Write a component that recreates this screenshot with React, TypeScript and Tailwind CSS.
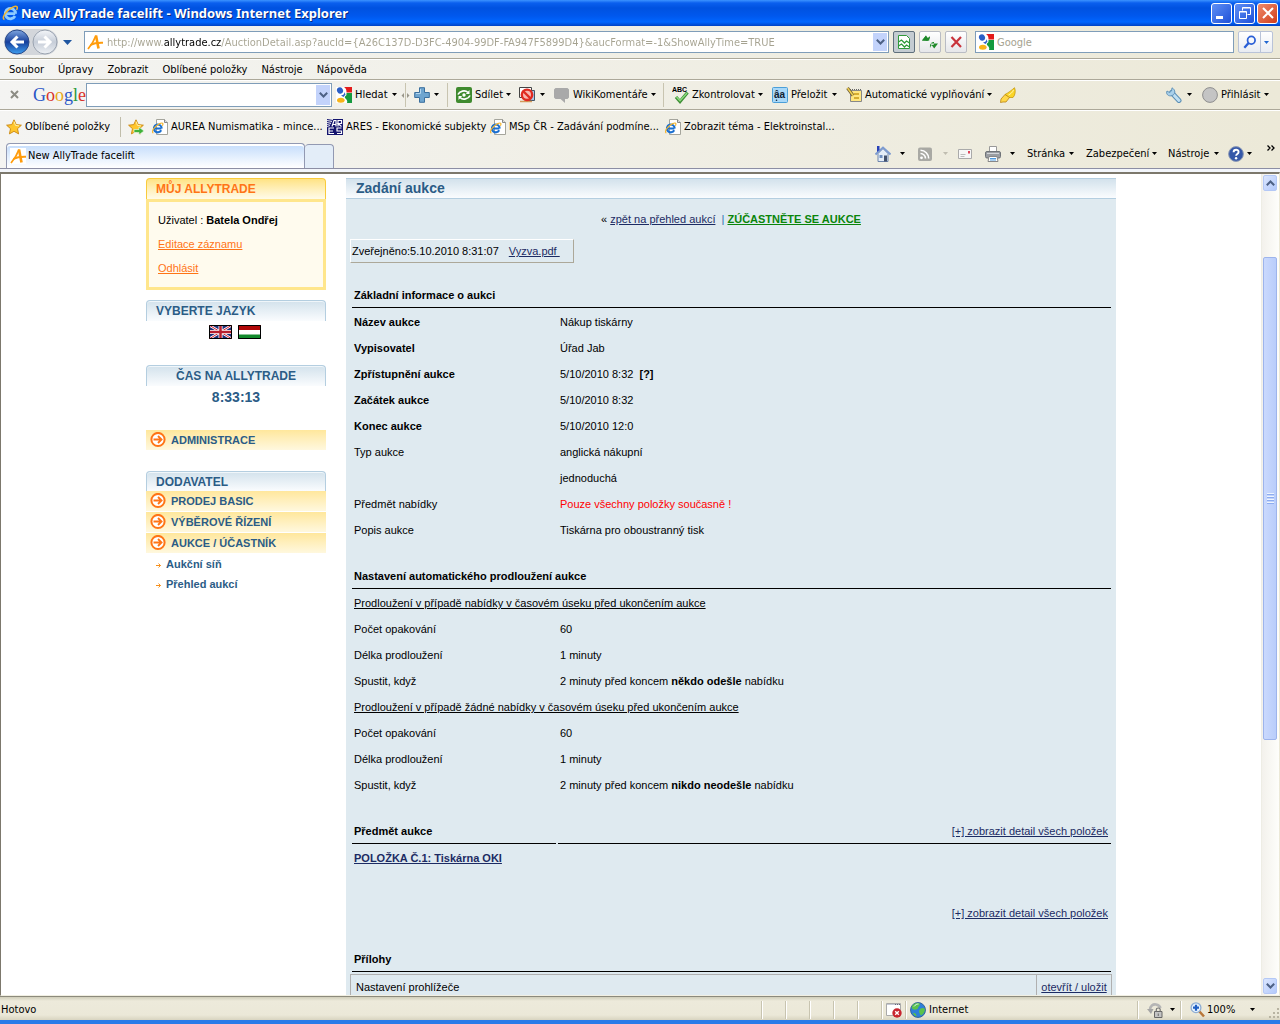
import React from "react";

type Kids = { children?: React.ReactNode; className?: string };

const UI = "font-['DejaVu_Sans_Condensed','Noto_Sans',sans-serif]";

function Svg({ children, size = 16 }: { children: React.ReactNode; size?: number }) {
  return (
    <svg width={size} height={size} viewBox="0 0 16 16" className="block shrink-0" aria-hidden="true">
      {children}
    </svg>
  );
}

function Arrow({ className = "text-black" }: { className?: string }) {
  return (
    <svg width="5" height="3" viewBox="0 0 5 3" className={"block shrink-0 " + className} aria-hidden="true">
      <path d="M0 0h5L2.5 3z" fill="currentColor" />
    </svg>
  );
}

const IELogo = ({ tone = "#2a84d8" }: { tone?: string }) => (
  <>
    <path d="M3.8 8.700h9.400M13 11a5.200 5.200 0 1 1 .6-2.300" fill="none" stroke={tone} strokeWidth="2.800" />
    <path d="M2.500 14.500C.5 14 1 10.500 5 6.500S13.500.6 14.800 1.600c.8.7.5 2-.3 3.400" fill="none" stroke="#f4b42c" strokeWidth="1.500" />
  </>
);

const IEPage = () => (
  <Svg>
    <path d="M4.500.5h8l3 3v12h-11z" fill="#fff" stroke="#a5a59c" />
    <path d="M12.500.5v3h3" fill="#ddd" stroke="#888" />
    <g transform="translate(-.5 3) scale(.75)">
      <IELogo tone="#1a6fd0" />
    </g>
  </Svg>
);

const AllyIcon = () => (
  <Svg>
    <path d="M0 0h16v16H0z" fill="#fff" />
    <path d="M1 15C4.500 11 7 7 9 1.500" fill="none" stroke="#ff9c0c" strokeWidth="1.800" />
    <path d="M9 1.500L11.500 14.500" fill="none" stroke="#ff9c0c" strokeWidth="2.600" />
    <path d="M3.500 11C7 9 11 8.500 16 8.700" fill="none" stroke="#ff9c0c" strokeWidth="2" />
  </Svg>
);

const GoogleG = () => (
  <Svg>
    <path d="M0 0h16v16H0z" fill="#fff" />
    <path d="M8 0h8v5.500h-5.500C10.500 3 10 1 8 0z" fill="#e31b1b" />
    <path d="M10.500 6H16v10h-5c.5-1 .5-3-1.500-4.500C8.500 10.500 8.500 9.500 9.500 9s1-1.500 1-3z" fill="#149a3e" />
    <ellipse cx="4" cy="3.500" rx="3" ry="3.300" fill="#2b5fc7" transform="rotate(-25 4 3.500)" />
    <path d="M5 8.500C8 8 8.500 6.500 8.300 5l1.200 2.500-2 2.500z" fill="#2b5fc7" />
    <ellipse cx="4.800" cy="13.200" rx="3.800" ry="2.500" fill="#f7b418" />
  </Svg>
);

const Star = ({ arrow = false }: { arrow?: boolean }) => (
  <Svg>
    <path d="M8 .8l2.200 4.800 5.200.6-3.900 3.500 1.100 5.200L8 12.300l-4.600 2.600 1.100-5.200L.6 6.200l5.200-.6z" fill="#ffc62e" stroke="#c98710" strokeWidth=".9" />
    <path d="M8 2.500l1.500 3.900 3.500.5" fill="none" stroke="#fff0a8" />
    {arrow && <path d="M6 10.500h5V8l5 4-5 3.800v-2.300H6z" fill="#3fb23a" stroke="#e9f7e2" strokeWidth=".7" />}
  </Svg>
);

const Plus = () => (
  <Svg>
    <path d="M5.500.7h5v4.800h4.800v5h-4.800v4.800h-5v-4.800H.7v-5h4.800z" fill="#6fa5cf" stroke="#3a6f9e" />
    <path d="M6.500 2v4.500H2" fill="none" stroke="#b5d7ef" />
  </Svg>
);

const ShareIcon = () => (
  <Svg>
    <rect width="16" height="16" rx="2" fill="#3f8a2e" />
    <path d="M2 7.500C3.500 4 9 2.500 12 5.500M14 8.500C12.500 12 7 13.500 4 10.500" fill="none" stroke="#fff" strokeWidth="1.700" />
    <path d="M13.500 3v4H9.800zM2.500 13V9h3.700z" fill="#fff" />
    <circle cx="8" cy="8" r="1.700" fill="#fff" />
  </Svg>
);

const BlockIcon = () => (
  <Svg>
    <path d="M.5.5h12v10H.5z" fill="#fff" stroke="#444" />
    <path d="M8.500 3.500h7v10h-7z" fill="#a8c6ea" stroke="#456" />
    <path d="M1 14.500h12" stroke="#d39a5a" strokeWidth="1.500" />
    <circle cx="8" cy="7.800" r="5.200" fill="#f7b6b0" stroke="#e02a20" strokeWidth="2.400" />
    <path d="M4.500 4.500l7 6.800" stroke="#e02a20" strokeWidth="2.400" />
  </Svg>
);

const Comment = () => (
  <Svg>
    <path d="M1.500 1h12L15 2.500v8L13.500 12H11v4l-4.500-4h-5L0 10.500v-8z" fill="#a9a9a9" />
  </Svg>
);

const Spell = () => (
  <svg width="17" height="18" viewBox="0 0 17 18" className="block shrink-0" aria-hidden="true">
    <text x="0" y="6" fontSize="7" fontWeight="700" fontFamily="Liberation Sans, sans-serif">ABC</text>
    <path d="M4 11l4 4.500L15.500 6.500" fill="none" stroke="#3f8f36" strokeWidth="3.200" />
    <path d="M4.500 11l3.500 3.700L15 7" fill="none" stroke="#8fdc80" strokeWidth="1.300" />
  </svg>
);

const Translate = () => (
  <Svg>
    <rect x=".5" y=".5" width="15" height="15" rx="1" fill="#a9d8f8" stroke="#4b9fd8" />
    <text x="2" y="11" fontSize="10" fontWeight="700" fill="#123" fontFamily="Liberation Sans, sans-serif">âa</text>
    <circle cx="4.500" cy="13.300" r=".8" fill="#123" />
  </Svg>
);

const Autofill = () => (
  <Svg>
    <path d="M4.500 3.500h11v11h-11z" fill="#ffe680" stroke="#888" />
    <path d="M4 2.500h12" stroke="#666" strokeDasharray="1 1" />
    <path d="M8 7h5" stroke="#c99a18" strokeWidth="1.500" />
    <path d="M8 11h5" stroke="#c99a18" strokeWidth="1.500" />
    <path d="M1.500 1l5.500 7.500" stroke="#6c5a30" strokeWidth="3" />
    <path d="M1.500 1l5.500 7.500" stroke="#f0d050" strokeWidth="1.500" />
  </Svg>
);

const Highlighter = () => (
  <Svg>
    <path d="M14.500.7c1.500 3 .5 8-1.500 9.800H8L5 7.500C8 6 12 3 14.500.7z" fill="#fbd526" stroke="#c69a10" strokeWidth=".8" />
    <path d="M5 7.500l4.500 3-3.500 4.500H3L.5 15.500 1 12z" fill="#ffd84a" stroke="#b98412" strokeWidth=".8" />
    <path d="M13.500 3c-1 2.500-3 4-5 5" fill="none" stroke="#fff4b0" />
  </Svg>
);

const Wrench = () => (
  <Svg>
    <path d="M5.500 5.500l7.500 8" stroke="#5b8fb5" strokeWidth="5" strokeLinecap="round" />
    <path d="M5.500 5.500l7.500 8" stroke="#bfdff2" strokeWidth="3" strokeLinecap="round" />
    <path d="M6 .8L5.500 4 3.500 5.500 1 4C-.5 7 2.500 9.800 6 8.600S10 3 6 .8z" fill="#a9d0ea" stroke="#5b8fb5" strokeWidth=".9" />
  </Svg>
);

const House = () => (
  <Svg>
    <path d="M3 7.500l5-5 5 5v8H3z" fill="#e4edf8" stroke="#6f86ad" />
    <path d="M.5 8.500L8 1.500l7.500 7" fill="none" stroke="#7d9bd0" strokeWidth="2" />
    <path d="M2 0h2.500v4L2 6z" fill="#2740b8" />
    <path d="M4.500 9h3v3h-3z" fill="#6f8fc0" />
    <path d="M9 9.500h3v6H9z" fill="#43516c" />
  </Svg>
);

const Rss = () => (
  <Svg>
    <rect x="1" y="1.500" width="14" height="13.500" rx="2" fill="#a9a9a4" />
    <circle cx="4.500" cy="11.800" r="1.400" fill="#fff" />
    <path d="M3.500 7.500a5 5 0 0 1 5 5M3.500 4.300a8.200 8.200 0 0 1 8.200 8.200" fill="none" stroke="#fff" strokeWidth="1.600" />
  </Svg>
);

const Mail = () => (
  <Svg>
    <path d="M1.500 3.500h13v9h-13z" fill="#f7f7f7" stroke="#aaa" />
    <path d="M3.500 8.500h5M3.500 10.500h4" stroke="#bcbcbc" />
    <path d="M11 5h2v2.500h-2z" fill="#e0455a" />
  </Svg>
);

const Printer = () => (
  <Svg>
    <path d="M4.500.5h7v6h-7z" fill="#fff" stroke="#999" />
    <rect x=".5" y="5.500" width="15" height="6.500" rx="1.500" fill="#9a9da2" stroke="#6f7378" />
    <path d="M2 7.500h12" stroke="#d3d6da" />
    <path d="M4 10.500h8l1 5H3z" fill="#fff" stroke="#888" />
    <path d="M5 12.500h6M5 14h6" stroke="#4f9be0" />
  </Svg>
);

const Help = () => (
  <Svg>
    <circle cx="8" cy="8" r="7.400" fill="#3558a8" stroke="#8e9bb5" />
    <path d="M5.600 6.200c0-3.300 5-3.200 5-.2 0 2-2.500 1.900-2.500 3.700" fill="none" stroke="#fff" strokeWidth="1.900" />
    <circle cx="8.100" cy="12.300" r="1.200" fill="#fff" />
  </Svg>
);

const Ares = () => (
  <Svg>
    <path d="M0 0h16v16H0z" fill="#14146e" />
    <path d="M0 1.500l6-1M0 3.500l5-1M0 5.500l4-1M0 7.500l3-1" stroke="#fff" strokeWidth=".9" />
    <path d="M5 7.500l2-6h2v6M6 5.500h3M11 7.500v-6h3.500v3H11l3.500 3M7 9H2v5.500h5M2 12h4M14.500 9H10v3h4.500v2.500H10" fill="none" stroke="#fff" strokeWidth="1.200" />
  </Svg>
);

const Globe = () => (
  <Svg>
    <circle cx="8" cy="8" r="7.500" fill="#2f7fd8" stroke="#27568c" strokeWidth=".8" />
    <path d="M3 2.800C5 1 9 .5 10 2c0 2-2 2.500-2 4S4 8.500 2.500 7C1.200 6 1.800 4 3 2.800zM10 7c2-1.500 4.500-1 5 .5-.3 3-2 5-4 6-1-1.500-3-4-1-6.500zM3 11c2-.5 3.500.5 3.500 3.500C5 14 3.500 13 3 11z" fill="#5cc24a" />
    <path d="M4 4.500c1.500-2 3-2.500 4.500-2.500" stroke="#dff3ff" fill="none" />
  </Svg>
);

const PagePrivacy = () => (
  <Svg>
    <path d="M.5 1.500h14v12H.5z" fill="#fff" stroke="#aaa" />
    <path d="M1 2.500h13" stroke="#c4c8d4" />
    <path d="M9 2.500h5" stroke="#667" strokeDasharray="1 1" />
    <circle cx="11" cy="11" r="4.700" fill="#c8252f" />
    <path d="M9.200 9.200l3.600 3.600M12.800 9.200l-3.600 3.600" stroke="#fff" strokeWidth="1.400" />
  </Svg>
);

const LockShield = () => (
  <Svg>
    <path d="M3 8c0-4 3-6 6-5.500C12 3 13 4.500 13.500 6" fill="none" stroke="#b5b5b5" strokeWidth="2.600" />
    <path d="M0 7h6.500L4 12z" fill="#a5a5a5" />
    <path d="M7.500 9.500h7.500v6H7.500z" fill="#c4c4c4" stroke="#666" />
    <path d="M9.300 9.500V7.500c0-2 3.900-2 3.900 0v2M11.300 11.500v2.500" fill="none" stroke="#777" strokeWidth="1.200" />
  </Svg>
);

const ZoomIcon = () => (
  <Svg>
    <path d="M9 9l5 5.500" stroke="#b9773a" strokeWidth="2.600" />
    <circle cx="6" cy="5.700" r="4.900" fill="#e8f4ff" stroke="#8fadd2" strokeWidth="1.300" />
    <path d="M6 2.700v6M3 5.700h6" stroke="#2160c4" strokeWidth="2.200" />
  </Svg>
);

function Chevron({ up = false }: { up?: boolean }) {
  return (
    <svg width="9" height="6" viewBox="0 0 9 6" className="block" aria-hidden="true">
      <path d={up ? "M.8 5.200l3.700-3.700 3.700 3.700" : "M.8.8l3.700 3.700L8.200.8"} fill="none" stroke="#4d6185" strokeWidth="2" />
    </svg>
  );
}

function ScrollButton({ up = false }: { up?: boolean }) {
  return (
    <button
      type="button"
      aria-label={up ? "Nahoru" : "Dolů"}
      className="flex h-4 w-full shrink-0 items-center justify-center rounded-xs border border-[#b4c8f6] bg-linear-to-br from-[#dbe6fe] to-[#b3c9fb]"
    >
      <Chevron up={up} />
    </button>
  );
}

function ToolButton({ icon, label, className = "", arrow = true }: { icon?: React.ReactNode; label?: string; className?: string; arrow?: boolean }) {
  return (
    <button type="button" aria-label={label ?? "Nástroj"} className={"flex h-5 shrink-0 items-center gap-[3px] whitespace-nowrap " + className}>
      {icon}
      {label && <span>{label}</span>}
      {arrow && (
        <span className="ml-auto">
          <Arrow />
        </span>
      )}
    </button>
  );
}

const Divider = () => <span className="h-6 w-px shrink-0 bg-[#c8c4b0]" />;

function FavLink({ icon, children, className }: Kids & { icon: React.ReactNode }) {
  return (
    <a href="#" className={"flex shrink-0 items-center gap-[3px] whitespace-nowrap " + (className ?? "")}>
      {icon}
      <span>{children}</span>
    </a>
  );
}

function SquareButton({ label, children, active = false }: Kids & { label: string; active?: boolean }) {
  return (
    <button
      type="button"
      aria-label={label}
      className={
        "flex h-[22px] w-[22px] shrink-0 items-center justify-center rounded-xs border " +
        (active ? "border-[#5f707c] bg-[#c4ccd2]" : "border-[#b9bcc4] bg-linear-to-b from-white to-[#e6e7ea]")
      }
    >
      {children}
    </button>
  );
}

function TitleBar() {
  return (
    <header className="flex h-[26px] shrink-0 items-center bg-[linear-gradient(#3c93ff_0,#0a5fee_3px,#0052e0_8px,#0058ee_16px,#0066ff_22px,#0042c4_26px)] pr-[2px] pl-[2px]">
      <Svg>
        <IELogo tone="#8ccbff" />
      </Svg>
      <h1 className="ml-[3px] font-['Noto_Sans',sans-serif] text-[13px] leading-5 font-bold whitespace-nowrap text-white [text-shadow:1px_1px_#0a2a80]">
        New AllyTrade facelift - Windows Internet Explorer
      </h1>
      <div className="ml-auto flex gap-[2px]">
        <button type="button" aria-label="Minimalizovat" className="flex h-[21px] w-[21px] items-end rounded-[3px] border border-white bg-linear-to-br from-[#5f8ff5] to-[#1f4fd8] p-1">
          <span className="h-[3px] w-[7px] bg-white" />
        </button>
        <button type="button" aria-label="Obnovit" className="flex h-[21px] w-[21px] items-center justify-center rounded-[3px] border border-white bg-linear-to-br from-[#5f8ff5] to-[#1f4fd8]">
          <svg width="12" height="12" viewBox="0 0 12 12" aria-hidden="true">
            <path d="M3.500 3.500v-3h8v7h-3M3.500 1h8M.5 4.500h7v7h-7zM.5 5h7" fill="none" stroke="#fff" />
          </svg>
        </button>
        <button type="button" aria-label="Zavřít" className="flex h-[21px] w-[21px] items-center justify-center rounded-[3px] border border-white bg-linear-to-br from-[#ee8a6a] to-[#d03a14]">
          <svg width="12" height="12" viewBox="0 0 12 12" aria-hidden="true">
            <path d="M1 1l10 10M11 1L1 11" stroke="#fff" strokeWidth="2" />
          </svg>
        </button>
      </div>
    </header>
  );
}

function RoundNav({ forward = false }: { forward?: boolean }) {
  const id = forward ? "nav-forward" : "nav-back";
  return (
    <button type="button" aria-label={forward ? "Vpřed" : "Zpět"} className="shrink-0">
      <svg width="26" height="26" viewBox="0 0 26 26" className="block" aria-hidden="true">
        <defs>
          <linearGradient id={id} x1="0" y1="0" x2="0" y2="1">
            <stop offset="0" stopColor={forward ? "#f4f6f9" : "#7fa6e0"} />
            <stop offset=".5" stopColor={forward ? "#c6cdd8" : "#163f9c"} />
            <stop offset="1" stopColor={forward ? "#eef1f5" : "#3f9ff0"} />
          </linearGradient>
        </defs>
        <circle cx="13" cy="13" r="12" fill={`url(#${id})`} stroke={forward ? "#9aa3b0" : "#2a4a8a"} />
        <path
          d={forward ? "M6 13h12M12.500 7.500L18 13l-5.500 5.500" : "M20 13H8M13.500 7.500L8 13l5.500 5.500"}
          fill="none"
          stroke="#fff"
          strokeWidth="3"
        />
      </svg>
    </button>
  );
}

function AddressBar() {
  return (
    <div className="flex h-8 shrink-0 items-center pr-[7px] pl-1">
      <div className="flex shrink-0 gap-[2px] rounded-full bg-[#d3d6db]">
        <RoundNav />
        <RoundNav forward />
      </div>
      <button type="button" aria-label="Poslední stránky" className="ml-[5px] shrink-0">
        <svg width="9" height="6" viewBox="0 0 9 6" className="block" aria-hidden="true">
          <path d="M0 1h9L4.500 6z" fill="#1f56a0" />
        </svg>
      </button>
      <div className="ml-3 flex h-[22px] min-w-0 flex-1 items-center border border-[#7f9db9] bg-white pl-[2px]">
        <AllyIcon />
        <input
          aria-label="Adresa"
          defaultValue="http://www.allytrade.cz/AuctionDetail.asp?aucId={A26C137D-D3FC-4904-99DF-FA947F5899D4}&aucFormat=-1&ShowAllyTime=TRUE"
          className="ml-[4px] h-5 min-w-0 flex-1 bg-[linear-gradient(90deg,#a5a290_57px,#000_57px,#000_114px,#a5a290_114px)] bg-clip-text text-[11px] text-transparent outline-none"
        />
        <button type="button" aria-label="Historie adres" className="mr-px flex h-[18px] w-[14px] items-center justify-center bg-[#c3d3fb]">
          <Chevron />
        </button>
      </div>
      <div className="ml-1 flex shrink-0 gap-1">
        <SquareButton label="Kompatibilní zobrazení" active>
          <Svg>
            <path d="M2.500 1.500h8l3 3v10h-11z" fill="#fff" stroke="#2f9a3a" />
            <path d="M2.500 8l3-2 3 3 2-2 3 2M2.500 12l3-2 3 3 2-2 3 2" fill="none" stroke="#2f9a3a" strokeWidth="1.300" />
          </Svg>
        </SquareButton>
        <SquareButton label="Aktualizovat">
          <Svg>
            <path d="M0 6.500L4 1.500v2.500c2 0 3-.5 4-2 .3 3-1 5-4 5h4z" fill="#1f8a2a" />
            <path d="M0 6.500h7.500L4 1.500z" fill="#1f8a2a" />
            <path d="M16 9.500H8.500l3.700 5zM12 10.500c-2 0-3 .5-4 3.500-.3-4 1-6 4-6z" fill="#1f8a2a" />
          </Svg>
        </SquareButton>
        <SquareButton label="Zastavit">
          <Svg>
            <path d="M3.500 3l9.500 10M13 3L3.500 13" stroke="#c9343c" strokeWidth="2.200" />
          </Svg>
        </SquareButton>
      </div>
      <div className="ml-[8px] flex h-[22px] w-[259px] shrink-0 items-center border border-[#7f9db9] bg-white pl-[2px]">
        <GoogleG />
        <input aria-label="Hledat" placeholder="Google" className="ml-[3px] h-5 min-w-0 flex-1 text-[11px] outline-none placeholder:text-[#a5a290]" />
      </div>
      <div className="ml-1 flex h-[22px] shrink-0 rounded-xs border border-[#b9c3d8] bg-linear-to-b from-white to-[#e9ecf2]">
        <button type="button" aria-label="Spustit hledání" className="flex w-[21px] items-center justify-center">
          <Svg size={14}>
            <circle cx="9.500" cy="6" r="4.300" fill="none" stroke="#2a5fd6" strokeWidth="2" />
            <path d="M6.500 9l-5 5.500" stroke="#2a5fd6" strokeWidth="2.600" />
          </Svg>
        </button>
        <button type="button" aria-label="Možnosti hledání" className="flex w-3 items-center justify-center border-l border-[#b9c3d8]">
          <Arrow className="text-[#1f66d0]" />
        </button>
      </div>
    </div>
  );
}

function MenuBar() {
  return (
    <nav className="flex h-[22px] shrink-0 items-center gap-[14px] border-t border-b border-t-[#aca899] border-b-[#aca899] pt-[2px] pl-[9px] shadow-[inset_0_1px_#fff]">
      {["Soubor", "Úpravy", "Zobrazit", "Oblíbené položky", "Nástroje", "Nápověda"].map((m) => (
        <button type="button" key={m} className="whitespace-nowrap">
          {m}
        </button>
      ))}
    </nav>
  );
}

function GoogleBar() {
  return (
    <div className="flex h-[30px] shrink-0 items-center border-b border-[#aca899] pl-[10px] shadow-[inset_0_1px_#fff]">
      <button type="button" aria-label="Zavřít lištu" className="shrink-0">
        <svg width="9" height="9" viewBox="0 0 9 9" className="block" aria-hidden="true">
          <path d="M1 1l7 7M8 1L1 8" stroke="#8c8c84" strokeWidth="2" />
        </svg>
      </button>
      <span className="ml-[14px] w-[53px] shrink-0 font-['Liberation_Serif',serif] text-[18px] leading-5">
        <span className="text-[#2a56c6]">G</span>
        <span className="text-[#d8322a]">o</span>
        <span className="text-[#e8a818]">o</span>
        <span className="text-[#2a56c6]">g</span>
        <span className="text-[#2c9a3c]">l</span>
        <span className="text-[#d8322a]">e</span>
      </span>
      <div className="flex h-6 w-[246px] shrink-0 items-center border border-[#7f9db9] bg-white">
        <input aria-label="Google Toolbar" className="h-5 min-w-0 flex-1 px-1 outline-none" />
        <button type="button" aria-label="Historie hledání" className="mr-px flex h-5 w-[14px] items-center justify-center bg-[#c3d3fb]">
          <Chevron />
        </button>
      </div>
      <ToolButton icon={<GoogleG />} label="Hledat" className="ml-1 w-[61px]" />
      <svg width="9" height="24" viewBox="0 0 9 24" className="mx-1 block shrink-0" aria-hidden="true">
        <path d="M4.500 0v24" stroke="#c8c4b0" />
        <path d="M3 10v5L.5 12.500zM6 10v5l2.500-2.500z" fill="#99968a" />
      </svg>
      <ToolButton icon={<Plus />} className="mr-2 w-[25px]" />
      <Divider />
      <ToolButton icon={<ShareIcon />} label="Sdílet" className="ml-2 w-[54px]" />
      <ToolButton icon={<BlockIcon />} className="ml-[9px] w-[26px]" />
      <ToolButton icon={<Comment />} label="WikiKomentáře" className="mr-2 ml-[9px] w-[101px]" />
      <Divider />
      <ToolButton icon={<Spell />} label="Zkontrolovat" className="ml-2 w-[91px]" />
      <ToolButton icon={<Translate />} label="Přeložit" className="ml-[9px] w-[65px]" />
      <ToolButton icon={<Autofill />} label="Automatické vyplňování" className="ml-[9px] w-[144px]" />
      <ToolButton icon={<Highlighter />} arrow={false} className="ml-[10px]" />
      <div className="ml-auto flex shrink-0 gap-[10px] pr-[11px]">
        <ToolButton icon={<Wrench />} className="w-[26px]" />
        <ToolButton
          icon={
            <Svg>
              <circle cx="8" cy="8" r="7.400" fill="#c4c4c4" stroke="#8e8e8e" />
            </Svg>
          }
          label="Přihlásit"
          className="w-[67px]"
        />
      </div>
    </div>
  );
}

function FavoritesBar() {
  return (
    <div className="flex h-[33px] shrink-0 items-center pl-[6px] shadow-[inset_0_1px_#fff]">
      <FavLink icon={<Star />} className="w-[114px]">Oblíbené položky</FavLink>
      <span className="h-5 w-px shrink-0 bg-[#c0bdaa]" />
      <button type="button" aria-label="Přidat na panel oblíbených položek" className="ml-[7px] shrink-0">
        <Star arrow />
      </button>
      <FavLink icon={<IEPage />} className="ml-2 w-[175px]">AUREA Numismatika - mince...</FavLink>
      <FavLink icon={<Ares />} className="w-[163px]">ARES - Ekonomické subjekty</FavLink>
      <FavLink icon={<IEPage />} className="w-[175px]">MSp ČR - Zadávání podmíne...</FavLink>
      <FavLink icon={<IEPage />}>Zobrazit téma - Elektroinstal...</FavLink>
    </div>
  );
}

function TabRow() {
  return (
    <div className="flex h-[26px] shrink-0 border-b border-[#8c8ea4] pl-[6px]">
      <div role="tab" aria-selected="true" className="flex w-[299px] shrink-0 items-center gap-[2px] rounded-t-sm border border-b-0 border-[#9299b2] bg-linear-to-b from-[#c3dcfb] to-white pl-[3px] shadow-[inset_0_2px_#fff]">
        <AllyIcon />
        <span className="whitespace-nowrap">New AllyTrade facelift</span>
      </div>
      <button type="button" aria-label="Nová karta" className="mt-px w-[29px] shrink-0 rounded-t-sm border border-b-0 border-l-0 border-[#9299b2] bg-[#e3edf8]" />
      <div className="ml-auto flex shrink-0 items-center pr-[5px] pb-1">
        <ToolButton icon={<House />} className="w-[30px]" />
        <ToolButton icon={<Rss />} arrow={false} className="ml-3" />
        <Arrow className="ml-[10px] text-[#c0bdb0]" />
        <ToolButton icon={<Mail />} arrow={false} className="ml-[9px]" />
        <ToolButton icon={<Printer />} className="ml-3 w-[30px]" />
        <ToolButton label="Stránka" className="ml-3 w-[47px]" />
        <ToolButton label="Zabezpečení" className="ml-3 w-[70px]" />
        <ToolButton label="Nástroje" className="ml-3 w-[51px]" />
        <ToolButton icon={<Help />} className="ml-[9px] w-[23px]" />
        <button type="button" aria-label="Další" className="mb-3 ml-4 shrink-0">
          <svg width="8" height="6" viewBox="0 0 8 6" className="block" aria-hidden="true">
            <path d="M.5.500L3 3 .5 5.500M4.500.500L7 3 4.500 5.500" fill="none" stroke="#000" strokeWidth="1.300" />
          </svg>
        </button>
      </div>
    </div>
  );
}

function SideHeading({ children, className = "" }: Kids) {
  return (
    <h2
      className={
        "rounded-t-sm border border-b-0 border-[#b4cee0] bg-linear-to-b from-[#d3e2ec] to-[#fafcfe] text-[12px] leading-5 font-bold text-[#2b5c86] shadow-[inset_0_1px_#f0f6fa] " +
        className
      }
    >
      {children}
    </h2>
  );
}

function SideItem({ children }: Kids) {
  return (
    <a href="#" className="flex h-5 items-center gap-[5px] bg-linear-to-b from-[#ffe79c] to-[#fff8de] pl-1 text-[11px] font-bold text-[#2b5c86]">
      <Svg>
        <circle cx="8" cy="7.500" r="6.600" fill="#fff" stroke="#ff7416" strokeWidth="2" />
        <path d="M3.500 7.500h8M8 4l3.500 3.500L8 11" fill="none" stroke="#ff7416" strokeWidth="1.900" />
      </Svg>
      <span>{children}</span>
    </a>
  );
}

function SubItem({ children }: Kids) {
  return (
    <li className="h-5">
      <a href="#" className="flex h-5 items-center gap-[5px] pl-[10px] text-[11px] font-bold text-[#2b5c86]">
        <svg width="5" height="5" viewBox="0 0 5 5" className="mt-[3px] block" aria-hidden="true">
          <path d="M0 2.500h4.500M2.500.500l2 2-2 2" fill="none" stroke="#f7901c" />
        </svg>
        {children}
      </a>
    </li>
  );
}

function Sidebar() {
  return (
    <aside className="w-[180px] shrink-0 pt-1">
      <h2 className="h-[21px] rounded-t-sm border border-b-0 border-[#f9cb3c] bg-linear-to-b from-[#ffe384] to-[#fffbe9] pl-[9px] text-[12px] leading-[21px] font-bold text-[#ff7416]">
        MŮJ ALLYTRADE
      </h2>
      <div className="flex h-[91px] flex-col gap-2 border-[3px] border-[#ffe68c] bg-[#fffbee] pt-[10px] pl-[9px] text-[11px] leading-4">
        <p>
          Uživatel : <b>Batela Ondřej</b>
        </p>
        <p>
          <a href="#" className="text-[#ff7416] underline">Editace záznamu</a>
        </p>
        <p>
          <a href="#" className="text-[#ff7416] underline">Odhlásit</a>
        </p>
      </div>
      <SideHeading className="mt-[10px] h-[21px] pl-[9px]">VYBERTE JAZYK</SideHeading>
      <div className="mt-1 flex justify-center gap-[6px] pr-[2px]">
        <button type="button" aria-label="English">
          <svg width="23" height="14" viewBox="0 0 23 14" className="block" aria-hidden="true">
            <path d="M0 0h23v14H0z" fill="#1c2f7a" />
            <path d="M0 0l23 14M23 0L0 14" stroke="#fff" strokeWidth="2.500" />
            <path d="M0 0l23 14M23 0L0 14" stroke="#d01f2e" strokeWidth="1" />
            <path d="M11.500 0v14M0 7h23" stroke="#fff" strokeWidth="4" />
            <path d="M11.500 0v14M0 7h23" stroke="#b81f2e" strokeWidth="2.500" />
            <path d="M.5.500h22v13H.5z" fill="none" stroke="#000" />
          </svg>
        </button>
        <button type="button" aria-label="Magyar">
          <svg width="23" height="14" viewBox="0 0 23 14" className="block" aria-hidden="true">
            <path d="M0 0h23v5H0z" fill="#b00808" />
            <path d="M0 5h23v4.500H0z" fill="#fff" />
            <path d="M0 9.500h23V14H0z" fill="#128a2c" />
            <path d="M.5.500h22v13H.5z" fill="none" stroke="#000" />
          </svg>
        </button>
      </div>
      <SideHeading className="mt-[26px] h-[21px] text-center">ČAS NA ALLYTRADE</SideHeading>
      <p className="mt-[3px] text-center text-[14px] leading-4 font-bold text-[#2b5c86]">8:33:13</p>
      <div className="mt-[25px]">
        <SideItem>ADMINISTRACE</SideItem>
      </div>
      <SideHeading className="mt-[21px] h-5 pl-[9px]">DODAVATEL</SideHeading>
      <nav className="flex flex-col gap-px">
        <SideItem>PRODEJ BASIC</SideItem>
        <SideItem>VÝBĚROVÉ ŘÍZENÍ</SideItem>
        <SideItem>AUKCE / ÚČASTNÍK</SideItem>
        <ul>
          <SubItem>Aukční síň</SubItem>
          <SubItem>Přehled aukcí</SubItem>
        </ul>
      </nav>
    </aside>
  );
}

function SectionTitle({ children }: Kids) {
  return (
    <h3 className="mb-px flex h-[46px] items-end border-b border-black pb-1 pl-[2px] text-[11px] leading-4 font-bold">
      {children}
    </h3>
  );
}

type Row = { label: string; value: React.ReactNode; strong?: boolean };

function Rows({ rows }: { rows: Row[] }) {
  return (
    <table className="w-full table-fixed border-collapse">
      <tbody>
        {rows.map((r, i) => (
          <tr key={i} className="h-[26px]">
            <th scope="row" className={"w-[208px] pl-[2px] text-left " + (r.strong ? "font-bold" : "font-normal")}>
              {r.label}
            </th>
            <td>{r.value}</td>
          </tr>
        ))}
      </tbody>
    </table>
  );
}

const basics: Row[] = [
  { label: "Název aukce", value: "Nákup tiskárny", strong: true },
  { label: "Vypisovatel", value: "Úřad Jab", strong: true },
  { label: "Zpřístupnění aukce", value: <>5/10/2010 8:32 <b className="ml-[3px]">[?]</b></>, strong: true },
  { label: "Začátek aukce", value: "5/10/2010 8:32", strong: true },
  { label: "Konec aukce", value: "5/10/2010 12:0", strong: true },
  { label: "Typ aukce", value: "anglická nákupní" },
  { label: "", value: "jednoduchá" },
  { label: "Předmět nabídky", value: <span className="text-[#f00]">Pouze všechny položky současně !</span> },
  { label: "Popis aukce", value: "Tiskárna pro oboustranný tisk" },
];

const extension = (who: string): Row[] => [
  { label: "Počet opakování", value: "60" },
  { label: "Délka prodloužení", value: "1 minuty" },
  { label: "Spustit, když", value: <>2 minuty před koncem <b>{who}</b> nabídku</> },
];

const DetailLink = () => (
  <a href="#" className="text-[#1c2b63] underline">
    [+] zobrazit detail všech položek
  </a>
);

function Auction() {
  return (
    <main className="mt-1 ml-5 min-w-0 flex-1 bg-[#dfeaf0] text-[11px]">
      <h2 className="h-[21px] border-t border-b border-[#b4cee0] bg-linear-to-b from-[#d3e2ec] to-[#fafcfe] pl-[10px] text-[14px] leading-[19px] font-bold text-[#2b5c86]">
        Zadání aukce
      </h2>
      <p className="mt-3 text-center leading-4">
        « <a href="#" className="text-[#1c2b63] underline">zpět na přehled aukcí</a> &nbsp;<span className="text-[#2a6fb0]">|</span>{" "}
        <a href="#" className="font-bold text-[#0a850a] underline">ZÚČASTNĚTE SE AUKCE</a>
      </p>
      <div className="mt-3 ml-1 flex h-6 w-[224px] items-center gap-[10px] border border-t-white border-r-[#aca899] border-b-[#aca899] border-l-white pl-px whitespace-nowrap">
        <span>Zveřejněno:5.10.2010 8:31:07</span>
        <a href="#" className="text-[#1c2b63] underline">Vyzva.pdf&nbsp;</a>
      </div>
      <div className="-mt-px mr-[5px] ml-[6px]">
        <SectionTitle>Základní informace o aukci</SectionTitle>
        <Rows rows={basics} />
        <SectionTitle>Nastavení automatického prodloužení aukce</SectionTitle>
        <p className="h-[26px] pl-[2px] leading-[26px] underline">Prodloužení v případě nabídky v časovém úseku před ukončením aukce</p>
        <Rows rows={extension("někdo odešle")} />
        <p className="h-[26px] pl-[2px] leading-[26px] underline">Prodloužení v případě žádné nabídky v časovém úseku před ukončením aukce</p>
        <Rows rows={extension("nikdo neodešle")} />
        <div className="mb-px flex h-[46px] items-end gap-[2px] leading-4">
          <h3 className="w-[204px] border-b border-black pb-1 pl-[2px] font-bold">Předmět aukce</h3>
          <p className="flex-1 border-b border-black pr-[3px] pb-1 text-right">
            <DetailLink />
          </p>
        </div>
        <p className="h-[26px] pl-[2px] leading-[26px] font-bold">
          <a href="#" className="text-[#1c2b63] underline">POLOŽKA Č.1: Tiskárna OKI</a>
        </p>
        <p className="mt-[29px] h-[26px] pr-[3px] text-right leading-[26px]">
          <DetailLink />
        </p>
        <SectionTitle>Přílohy</SectionTitle>
      </div>
      <table className="mt-[2px] mr-1 ml-1 w-[calc(100%-8px)] border-collapse">
        <tbody>
          <tr className="h-6">
            <td className="border border-[#b0b0b0] pl-[5px]">Nastavení prohlížeče</td>
            <td className="w-[75px] border border-[#b0b0b0] text-center whitespace-nowrap">
              <a href="#" className="text-[#1c2b63] underline">otevřít / uložit</a>
            </td>
          </tr>
        </tbody>
      </table>
    </main>
  );
}

function ScrollBar() {
  return (
    <div className="flex w-[18px] shrink-0 flex-col border-l border-[#eeede5] bg-linear-to-r from-[#f3f1ec] to-[#fefefb] py-px pr-[2px] pl-px">
      <ScrollButton up />
      <div className="flex flex-1 flex-col pt-[66px] pb-[238px]">
        <div className="flex w-full flex-1 flex-col items-center justify-center gap-px rounded-xs border border-[#9db4ec] bg-linear-to-r from-[#cad9fd] to-[#b9cdfb]">
          {[0, 1, 2, 3].map((i) => (
            <span key={i} className="h-[2px] w-[7px] border-b border-[#8cacf0] bg-[#eef4fe]" />
          ))}
        </div>
      </div>
      <ScrollButton />
    </div>
  );
}

function StatusCell({ className = "", children }: Kids) {
  return <div className={"flex h-[18px] shrink-0 items-center border-l border-[#c8c4b0] shadow-[inset_1px_0_#fff] " + className}>{children}</div>;
}

function StatusBar() {
  return (
    <footer className="flex h-6 shrink-0 items-center border-t border-[#8c8a7c] bg-[linear-gradient(#d0ceba_0,#edeadb_4px,#ebe8d8_18px,#d8d4c0_23px)] pt-[2px] pl-px">
      <span className="flex-1">Hotovo</span>
      <StatusCell className="w-6" />
      <StatusCell className="w-6" />
      <StatusCell className="w-6" />
      <StatusCell className="w-6" />
      <StatusCell className="w-6" />
      <StatusCell className="w-6 pl-1">
        <PagePrivacy />
      </StatusCell>
      <StatusCell className="w-[232px] gap-[3px] pl-1">
        <Globe />
        Internet
      </StatusCell>
      <StatusCell className="w-[43px] gap-[7px] pl-[9px]">
        <LockShield />
        <Arrow />
      </StatusCell>
      <StatusCell className="w-[100px] gap-px pl-[9px]">
        <ZoomIcon />
        100%
        <span className="ml-[14px]">
          <Arrow />
        </span>
        <svg width="11" height="11" viewBox="0 0 11 11" className="mt-2 ml-auto block" aria-hidden="true">
          <path d="M8 0h2v2H8zM4 4h2v2H4zM8 4h2v2H8zM0 8h2v2H0zM4 8h2v2H4zM8 8h2v2H8z" fill="#b8b4a2" />
        </svg>
      </StatusCell>
    </footer>
  );
}

export default function App() {
  return (
    <div className={"flex h-screen flex-col overflow-hidden bg-[#f0efe9] text-[11px] leading-4 text-black " + UI}>
      <TitleBar />
      <div className="flex shrink-0 flex-col bg-linear-to-r from-[#f4f4f2] to-[#ece9d8]">
        <AddressBar />
        <MenuBar />
        <GoogleBar />
        <FavoritesBar />
        <TabRow />
      </div>
      <div className="flex min-h-0 flex-1 flex-col bg-[#f3f6fb] pt-[3px]">
        <div className="flex min-h-0 flex-1 border-t-2 border-r border-b border-l border-t-[#7c786c] border-r-[#ece9d8] border-b-[#f1efe2] border-l-[#7c786c] bg-white">
          <div className="min-w-0 flex-1 overflow-hidden font-['Liberation_Sans',Arial,sans-serif]">
            <div className="mx-auto flex w-full max-w-[970px]">
              <Sidebar />
              <Auction />
            </div>
          </div>
          <ScrollBar />
        </div>
      </div>
      <StatusBar />
      <div className="h-1 shrink-0 bg-[#2a7be8]" />
    </div>
  );
}
